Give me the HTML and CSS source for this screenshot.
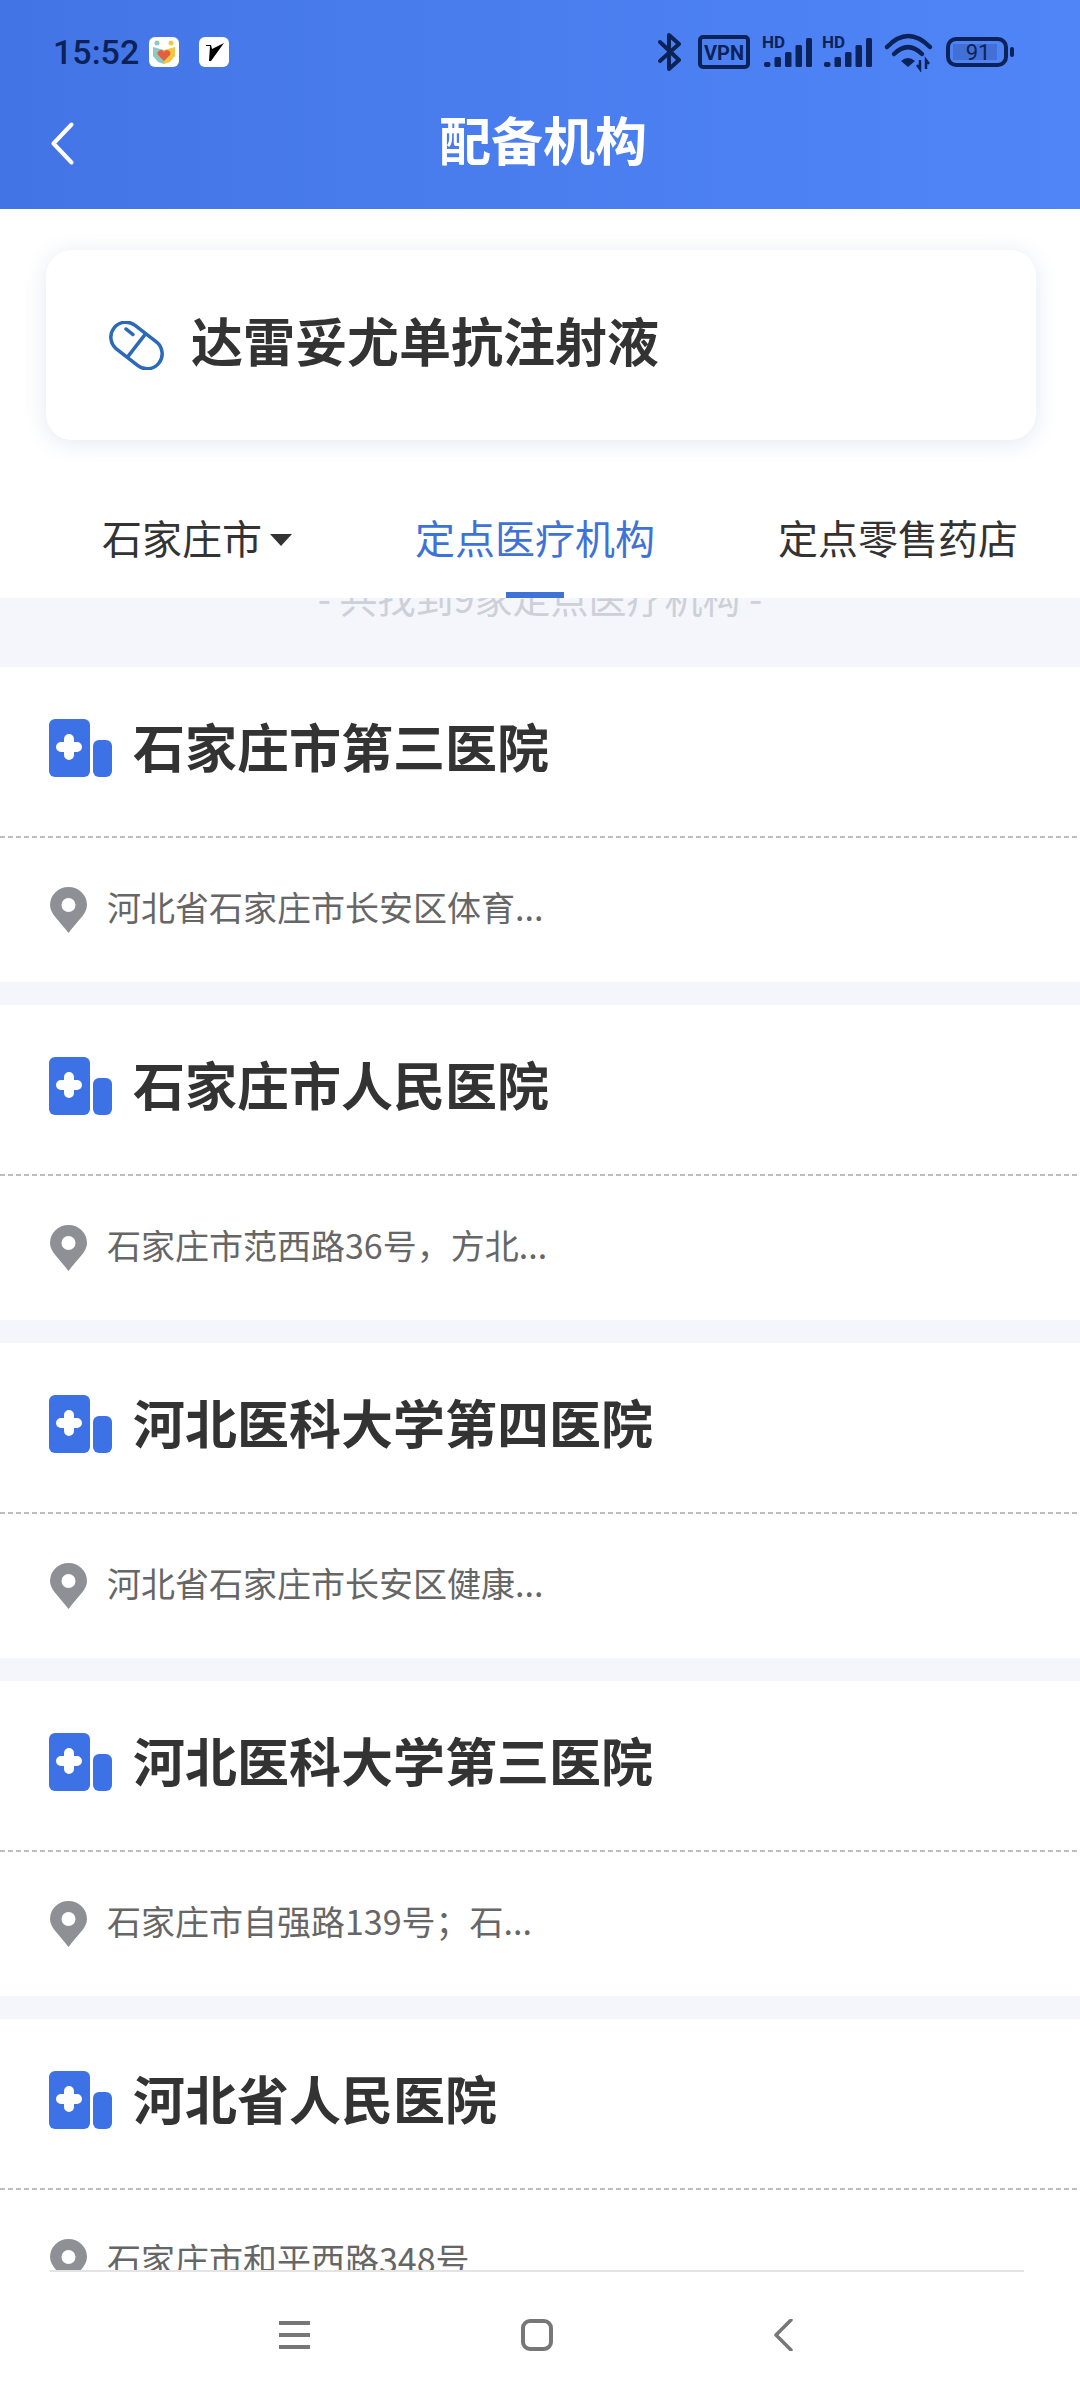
FILE: index.html
```html
<!DOCTYPE html>
<html lang="zh-CN">
<head>
<meta charset="utf-8">
<title>配备机构</title>
<link rel="stylesheet" href="styles.css">
</head>
<body>
<div class="screen">
  <header class="header">
    <div class="status">
      <div class="status-left">
        <span class="time">15:52</span>
        <svg class="app-icon" viewBox="0 0 30 30"><rect width="30" height="30" rx="6" fill="#fff"/><path d="M4 10l11 3v14l-6-2-5-6z" fill="#8cc9c4"/><path d="M26 10l-11 3v14l6-2 5-6z" fill="#f3c644"/><circle cx="8" cy="6" r="2.500" fill="#8cc9c4"/><circle cx="22" cy="6" r="2.500" fill="#f3c644"/><path d="M15 24l-6-6a3.300 3.300 0 0 1 6-3 3.300 3.300 0 0 1 6 3z" fill="#e2603c"/></svg>
        <svg class="app-icon app-icon-second" viewBox="0 0 30 30"><rect width="30" height="30" rx="6" fill="#fff"/><path d="M7 9h4l-1 15h2L25 6 13 12l-1-4H7z" fill="#000"/></svg>
      </div>
      <div class="status-right">
        <svg class="si" width="30" height="40" viewBox="0 0 30 40"><path d="M2 10l19 18-10 9V3l10 9L2 29" fill="none" stroke="#0b2358" stroke-width="4" stroke-linejoin="round" stroke-linecap="round"/></svg>
        <svg class="si" width="54" height="40" viewBox="0 0 54 40"><rect x="2" y="5" width="48" height="30" rx="3" fill="none" stroke="#0b2358" stroke-width="4"/><text x="26" y="27.500" class="svg-vpn" text-anchor="middle">VPN</text></svg>
        <svg class="si" width="50" height="40" viewBox="0 0 50 40"><text x="0" y="16" class="svg-hd">HD</text><rect x="2" y="30" width="6.500" height="5" rx="2" class="bar"/><rect x="12.500" y="25" width="6.500" height="10" rx="1.500" class="bar"/><rect x="23" y="20" width="6.500" height="15" rx="1.500" class="bar"/><rect x="33.500" y="13" width="6.500" height="22" rx="1.500" class="bar"/><rect x="44" y="6" width="6" height="29" rx="1.500" class="bar"/></svg>
        <svg class="si" width="50" height="40" viewBox="0 0 50 40"><text x="0" y="16" class="svg-hd">HD</text><rect x="2" y="30" width="6.500" height="5" rx="2" class="bar"/><rect x="12.500" y="25" width="6.500" height="10" rx="1.500" class="bar"/><rect x="23" y="20" width="6.500" height="15" rx="1.500" class="bar"/><rect x="33.500" y="13" width="6.500" height="22" rx="1.500" class="bar"/><rect x="44" y="6" width="6" height="29" rx="1.500" class="bar"/></svg>
        <svg class="si" width="54" height="40" viewBox="0 0 54 40"><path d="M5 15Q26 -7 48 15M12 22Q26 8 40 22" fill="none" stroke="#0b2358" stroke-width="4.500" stroke-linecap="round"/><path d="M19 29Q26 23 33 29L26 35z" fill="#0b2358"/><path d="M38 28v9M35 33l3 4 0-9M44 37v-9l3 4" fill="none" stroke="#0b2358" stroke-width="2.500"/></svg>
        <svg class="si" width="68" height="40" viewBox="0 0 68 40"><rect x="2" y="7" width="58" height="26" rx="8" fill="none" stroke="#0b2358" stroke-width="4"/><rect x="7" y="12" width="44" height="16" fill="#0b2358" fill-opacity=".2"/><text x="32" y="28" class="svg-batt" text-anchor="middle">91</text><rect x="64" y="15" width="4" height="10" rx="2" fill="#0b2358"/></svg>
      </div>
    </div>
    <div class="titlebar">
      <svg class="back" width="23" height="43" viewBox="0 0 23 43"><path d="M20.500 2.500L2.500 21.500 20.500 40.500" fill="none" stroke="#fff" stroke-width="4" stroke-linecap="round" stroke-linejoin="round"/></svg>
      <h1 class="title">配备机构</h1>
      <span></span>
    </div>
  </header>

  <section class="drug-wrap">
    <div class="drug-card">
      <svg class="pill" width="55" height="49" viewBox="0 0 55 49"><g transform="rotate(38 27.500 24.500)" fill="none" stroke="#2a6ab8" stroke-width="3.500"><rect x="-1" y="9.500" width="57" height="30" rx="15"/><path d="M27.500 9.500v30"/><path d="M9 18h9" stroke-linecap="round"/></g></svg>
      <span class="drug-name">达雷妥尤单抗注射液</span>
    </div>
  </section>

  <nav class="tabs">
    <div class="tab">石家庄市<i class="caret"></i></div>
    <div class="tab tab-active">定点医疗机构</div>
    <div class="tab">定点零售药店</div>
  </nav>

  <main class="list">
    <div class="tip">- 共找到9家定点医疗机构 -</div>

    <article class="item">
      <div class="item-head">
        <svg class="hosp" width="63" height="58" viewBox="0 0 63 58"><rect width="41" height="58" rx="6" fill="#3d72e6"/><rect x="44" y="21" width="19" height="37" rx="6" fill="#3d72e6"/><path d="M20 20v16M12 28h16" stroke="#fff" stroke-width="10" stroke-linecap="round"/></svg>
        <h2 class="item-name">石家庄市第三医院</h2>
      </div>
      <div class="dash"></div>
      <div class="item-addr">
        <svg class="pin" width="37" height="46" viewBox="0 0 37 46"><path fill-rule="evenodd" d="M18.500 46C9 33 0 27 0 18a18.500 18 0 0 1 37 0c0 9-9 15-18.500 28zM18.500 11a7 7 0 1 0 0 14 7 7 0 0 0 0-14z" fill="#8f9096"/></svg>
        <span class="addr">河北省石家庄市长安区体育...</span>
      </div>
    </article>

    <article class="item">
      <div class="item-head">
        <svg class="hosp" width="63" height="58" viewBox="0 0 63 58"><rect width="41" height="58" rx="6" fill="#3d72e6"/><rect x="44" y="21" width="19" height="37" rx="6" fill="#3d72e6"/><path d="M20 20v16M12 28h16" stroke="#fff" stroke-width="10" stroke-linecap="round"/></svg>
        <h2 class="item-name">石家庄市人民医院</h2>
      </div>
      <div class="dash"></div>
      <div class="item-addr">
        <svg class="pin" width="37" height="46" viewBox="0 0 37 46"><path fill-rule="evenodd" d="M18.500 46C9 33 0 27 0 18a18.500 18 0 0 1 37 0c0 9-9 15-18.500 28zM18.500 11a7 7 0 1 0 0 14 7 7 0 0 0 0-14z" fill="#8f9096"/></svg>
        <span class="addr">石家庄市范西路36号，方北...</span>
      </div>
    </article>

    <article class="item">
      <div class="item-head">
        <svg class="hosp" width="63" height="58" viewBox="0 0 63 58"><rect width="41" height="58" rx="6" fill="#3d72e6"/><rect x="44" y="21" width="19" height="37" rx="6" fill="#3d72e6"/><path d="M20 20v16M12 28h16" stroke="#fff" stroke-width="10" stroke-linecap="round"/></svg>
        <h2 class="item-name">河北医科大学第四医院</h2>
      </div>
      <div class="dash"></div>
      <div class="item-addr">
        <svg class="pin" width="37" height="46" viewBox="0 0 37 46"><path fill-rule="evenodd" d="M18.500 46C9 33 0 27 0 18a18.500 18 0 0 1 37 0c0 9-9 15-18.500 28zM18.500 11a7 7 0 1 0 0 14 7 7 0 0 0 0-14z" fill="#8f9096"/></svg>
        <span class="addr">河北省石家庄市长安区健康...</span>
      </div>
    </article>

    <article class="item">
      <div class="item-head">
        <svg class="hosp" width="63" height="58" viewBox="0 0 63 58"><rect width="41" height="58" rx="6" fill="#3d72e6"/><rect x="44" y="21" width="19" height="37" rx="6" fill="#3d72e6"/><path d="M20 20v16M12 28h16" stroke="#fff" stroke-width="10" stroke-linecap="round"/></svg>
        <h2 class="item-name">河北医科大学第三医院</h2>
      </div>
      <div class="dash"></div>
      <div class="item-addr">
        <svg class="pin" width="37" height="46" viewBox="0 0 37 46"><path fill-rule="evenodd" d="M18.500 46C9 33 0 27 0 18a18.500 18 0 0 1 37 0c0 9-9 15-18.500 28zM18.500 11a7 7 0 1 0 0 14 7 7 0 0 0 0-14z" fill="#8f9096"/></svg>
        <span class="addr">石家庄市自强路139号；石...</span>
      </div>
    </article>

    <article class="item">
      <div class="item-head">
        <svg class="hosp" width="63" height="58" viewBox="0 0 63 58"><rect width="41" height="58" rx="6" fill="#3d72e6"/><rect x="44" y="21" width="19" height="37" rx="6" fill="#3d72e6"/><path d="M20 20v16M12 28h16" stroke="#fff" stroke-width="10" stroke-linecap="round"/></svg>
        <h2 class="item-name">河北省人民医院</h2>
      </div>
      <div class="dash"></div>
      <div class="item-addr">
        <svg class="pin" width="37" height="46" viewBox="0 0 37 46"><path fill-rule="evenodd" d="M18.500 46C9 33 0 27 0 18a18.500 18 0 0 1 37 0c0 9-9 15-18.500 28zM18.500 11a7 7 0 1 0 0 14 7 7 0 0 0 0-14z" fill="#8f9096"/></svg>
        <span class="addr">石家庄市和平西路348号</span>
      </div>
    </article>
  </main>

  <footer class="navbar">
    <svg width="31" height="32" viewBox="0 0 31 32"><path d="M0 4h31M0 16h31M0 28h31" stroke="#777" stroke-width="4"/></svg>
    <svg width="32" height="32" viewBox="0 0 32 32"><rect x="2" y="2" width="28" height="28" rx="7" fill="none" stroke="#777" stroke-width="4"/></svg>
    <svg width="29" height="32" viewBox="0 0 29 32"><path d="M27 1L12 16l15 15" fill="none" stroke="#777" stroke-width="3.500" stroke-linecap="round" stroke-linejoin="round"/></svg>
  </footer>
</div>
</body>
</html>
```
FILE: styles.css
```css
* {
  box-sizing: border-box;
}

html,
body {
  margin: 0;
  padding: 0;
  background: #fff;
}

body {
  font-family: "Noto Sans CJK SC", "Noto Sans", sans-serif;
}

.screen {
  width: 1080px;
  height: 2400px;
  display: flex;
  flex-direction: column;
  overflow: hidden;
  background: #fff;
}

/* header */
.header {
  height: 209px;
  flex: none;
  background: linear-gradient(90deg, #4374e5 0%, #4a7eef 50%, #5085f8 100%);
}

.status {
  height: 104px;
  display: flex;
  justify-content: space-between;
  align-items: center;
  padding: 0 66px 0 53px;
}

.status-left {
  display: flex;
  align-items: center;
}

.time {
  font-family: Roboto, sans-serif;
  font-size: 34px;
  font-weight: 500;
  line-height: 40px;
  color: #0b2358;
  width: 96px;
}

.app-icon {
  width: 30px;
  height: 30px;
  display: block;
}

.app-icon-second {
  margin-left: 20px;
}

.status-right {
  display: flex;
  align-items: center;
  gap: 10px;
}

.si {
  display: block;
}

.bar {
  fill: #0b2358;
}

.svg-vpn {
  font-family: Roboto, sans-serif;
  font-size: 20px;
  font-weight: 700;
  fill: #0b2358;
}

.svg-hd {
  font-family: Roboto, sans-serif;
  font-size: 17px;
  font-weight: 700;
  fill: #0b2358;
}

.svg-batt {
  font-family: Roboto, sans-serif;
  font-size: 22px;
  fill: #0b2358;
}

.titlebar {
  height: 78px;
  display: grid;
  grid-template-columns: 1fr auto 1fr;
  align-items: center;
  padding-left: 51px;
  padding-right: 51px;
}

.title {
  margin: 0;
  padding: 0 0 8px 6px;
  font-size: 52px;
  font-weight: 700;
  line-height: 70px;
  color: #fff;
}

.back {
  display: block;
}

/* drug card */
.drug-wrap {
  position: relative;
  z-index: 2;
  flex: none;
  height: 231px;
  padding: 41px 44px 0 46px;
}

.drug-card {
  height: 190px;
  display: flex;
  align-items: center;
  padding-left: 63px;
  gap: 27px;
  background: #fff;
  border-radius: 26px;
  box-shadow: 0 3px 22px rgba(70, 100, 170, 0.15);
}

.pill {
  display: block;
  flex: none;
}

.drug-name {
  padding-bottom: 11px;
  font-size: 52px;
  font-weight: 700;
  line-height: 70px;
  color: #333;
}

/* tabs */
.tabs {
  position: relative;
  z-index: 1;
  flex: none;
  height: 158px;
  display: flex;
  justify-content: space-between;
  padding: 77px 62px 0 102px;
  background: #fff;
}

.tab {
  position: relative;
  display: flex;
  align-items: flex-start;
  font-size: 40px;
  line-height: 40px;
  height: 81px;
  color: #333;
}

.caret {
  width: 0;
  height: 0;
  margin: 17px 0 0 8px;
  border-left: 11px solid transparent;
  border-right: 11px solid transparent;
  border-top: 12px solid #333;
}

.tab-active {
  color: #3f72d6;
}

.tab-active::after {
  content: "";
  position: absolute;
  left: 91px;
  bottom: 0;
  width: 58px;
  height: 6px;
  background: #3f72d6;
}

/* list */
.list {
  flex: 1;
  min-height: 0;
  overflow: hidden;
  background: #f4f6fb;
}

.tip {
  height: 90px;
  margin-top: -21px;
  font-size: 38px;
  line-height: 40px;
  text-align: center;
  color: #cdd0d8;
}

.item {
  height: 315px;
  margin-bottom: 23px;
  background: #fff;
}

.item-head {
  height: 169px;
  display: flex;
  align-items: center;
  gap: 21px;
  padding: 0 0 7px 49px;
}

.hosp,
.pin {
  display: block;
  flex: none;
}

.item-name {
  margin: 0;
  padding-bottom: 5px;
  font-size: 52px;
  font-weight: 700;
  line-height: 70px;
  color: #333;
}

.dash {
  height: 2px;
  background: repeating-linear-gradient(90deg, #bdbdbd 0 5px, transparent 5px 8px);
}

.item-addr {
  height: 144px;
  display: flex;
  align-items: center;
  gap: 20px;
  padding-left: 50px;
}

.addr {
  padding-bottom: 6px;
  font-size: 34px;
  line-height: 44px;
  color: #666;
}

/* bottom navigation */
.navbar {
  flex: none;
  height: 130px;
  margin: 0 56px 0 50px;
  border-top: 2px solid #e4e4e4;
  display: flex;
  justify-content: space-between;
  align-items: flex-start;
  padding: 47px 231px 0 229px;
}

.navbar svg {
  display: block;
}
```
